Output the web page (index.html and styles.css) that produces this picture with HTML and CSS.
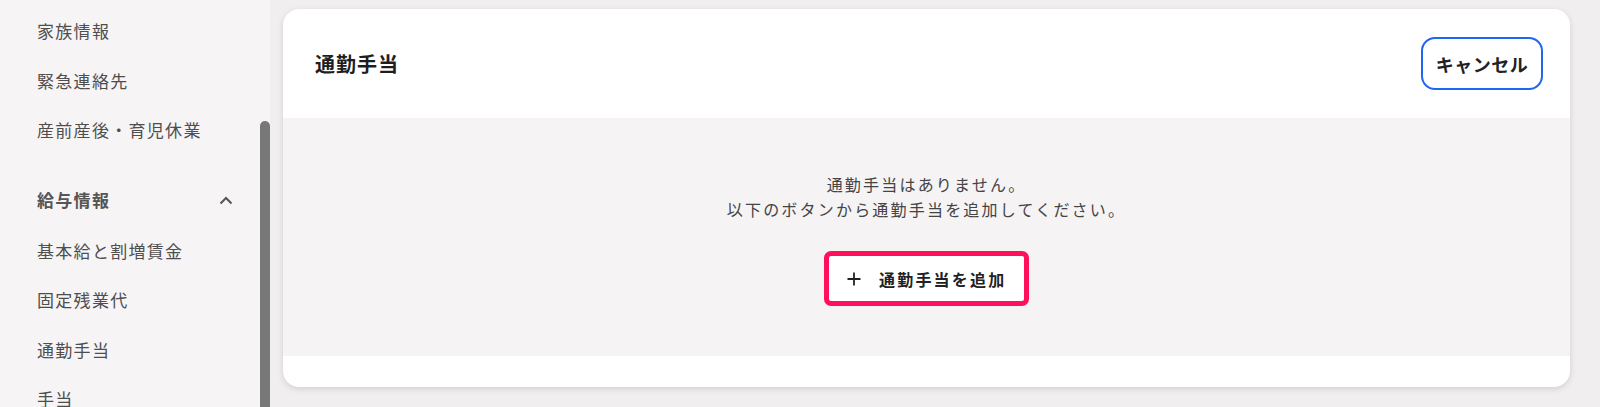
FILE: index.html
```html
<!DOCTYPE html>
<html lang="ja">
<head>
<meta charset="utf-8">
<link rel="stylesheet" href="styles.css">
</head>
<body>
<div class="app">
  <aside class="sidebar">
    <nav class="nav">
      <a class="nav-item">家族情報</a>
      <a class="nav-item">緊急連絡先</a>
      <a class="nav-item">産前産後・育児休業</a>
      <div class="nav-group">
        <span>給与情報</span>
        <svg class="chevron" width="14" height="9" viewBox="0 0 14 9"><path d="M1.5 7.5 L7 2 L12.5 7.5" fill="none" stroke="#555" stroke-width="2"/></svg>
      </div>
      <a class="nav-item">基本給と割増賃金</a>
      <a class="nav-item">固定残業代</a>
      <a class="nav-item">通勤手当</a>
      <a class="nav-item">手当</a>
    </nav>
    <div class="scroll-thumb"></div>
  </aside>
  <main class="main">
    <section class="card">
      <header class="card-header">
        <h2 class="card-title">通勤手当</h2>
        <button class="btn-cancel">キャンセル</button>
      </header>
      <div class="card-body">
        <p class="empty-text">通勤手当はありません。<br>以下のボタンから通勤手当を追加してください。</p>
        <button class="btn-add">
          <svg class="plus" width="14" height="14" viewBox="0 0 14 14"><path d="M7 0.5 V13.5 M0.5 7 H13.5" stroke="#222" stroke-width="1.8" fill="none"/></svg>
          <span>通勤手当を追加</span>
        </button>
      </div>
      <div class="card-footer"></div>
    </section>
  </main>
</div>
</body>
</html>
```

FILE: styles.css
```css
* { box-sizing: border-box; }
html, body { margin: 0; padding: 0; }
body {
  font-family: "Noto Sans CJK JP", "Noto Sans", sans-serif;
  background: #f0eeef;
  color: #333;
  width: 1600px;
  height: 407px;
  overflow: hidden;
}
.app {
  display: flex;
  height: 407px;
}
.sidebar {
  position: relative;
  width: 270px;
  flex: 0 0 270px;
  background: #f6f4f5;
  overflow: hidden;
}
.nav {
  display: flex;
  flex-direction: column;
  padding: 6px 0 0 37px;
}
.nav-item {
  display: flex;
  align-items: center;
  height: 49.5px;
  font-size: 17px;
  letter-spacing: 1.3px;
  color: #4e4e4e;
}
.nav-group {
  display: flex;
  align-items: center;
  justify-content: space-between;
  height: 52px;
  margin-top: 19px;
  padding-right: 37px;
  font-size: 17px;
  letter-spacing: 1.3px;
  font-weight: 700;
  color: #555;
}
.chevron { display: block; margin-top: 2px; }
.scroll-thumb {
  position: absolute;
  left: 260px;
  top: 121px;
  width: 10px;
  height: 300px;
  border-radius: 5px;
  background: #787878;
}
.main {
  flex: 1;
  padding: 9px 30px 0 13px;
}
.card {
  background: #fff;
  border-radius: 16px;
  box-shadow: 0 2px 6px rgba(0,0,0,0.13);
  overflow: hidden;
}
.card-header {
  display: flex;
  align-items: center;
  justify-content: space-between;
  height: 109px;
  padding: 0 27px 0 32px;
}
.card-title {
  margin: 0;
  font-size: 20px;
  font-weight: 700;
  letter-spacing: 1px;
  color: #1e1e1e;
}
.btn-cancel {
  width: 122px;
  height: 53px;
  border: 2px solid #1f66f0;
  border-radius: 14px;
  background: #fff;
  font-family: inherit;
  font-size: 18px;
  font-weight: 700;
  letter-spacing: 0.5px;
  color: #222;
  padding: 0;
}
.card-body {
  background: #f5f3f4;
  height: 238px;
  display: flex;
  flex-direction: column;
  align-items: center;
  padding-top: 54px;
}
.empty-text {
  margin: 0;
  text-align: center;
  font-size: 16px;
  line-height: 25px;
  letter-spacing: 2.2px;
  color: #444;
}
.btn-add {
  margin-top: 29px;
  width: 205px;
  height: 55px;
  display: flex;
  align-items: center;
  gap: 18px;
  padding: 0 0 0 18px;
  border: 5px solid #ff0f5c;
  border-radius: 7px;
  background: #fff;
  font-family: inherit;
  font-size: 16px;
  font-weight: 700;
  letter-spacing: 2.2px;
  color: #222;
}
.plus { display: block; flex: 0 0 auto; }
.card-footer {
  height: 31px;
}
```
